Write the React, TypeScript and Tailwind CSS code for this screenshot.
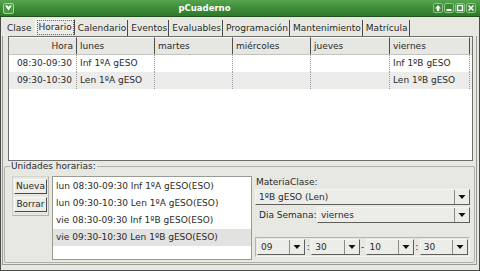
import React from 'react';

const tabs = ['Clase', 'Horario', 'Calendario', 'Eventos', 'Evaluables', 'Programación', 'Mantenimiento', 'Matrícula'];
const days = ['lunes', 'martes', 'miércoles', 'jueves', 'viernes'];
const rows = [
  { hora: '08:30-09:30', cells: ['Inf 1ºA gESO', '', '', '', 'Inf 1ºB gESO'], bg: 'bg-white' },
  { hora: '09:30-10:30', cells: ['Len 1ºA gESO', '', '', '', 'Len 1ºB gESO'], bg: 'bg-[#ececea]' },
];
const unidades = [
  'lun 08:30-09:30 Inf 1ºA gESO(ESO)',
  'lun 09:30-10:30 Len 1ºA gESO(ESO)',
  'vie 08:30-09:30 Inf 1ºB gESO(ESO)',
  'vie 09:30-10:30 Len 1ºB gESO(ESO)',
];

const Arrow = () => (
  <svg width="8" height="6" viewBox="0 0 8 6">
    <path d="M0.5 1h7L4 5z" fill="#111" />
  </svg>
);

const Combo = ({ text, className = '' }: { text: string; className?: string }) => (
  <div
    className={`flex h-[16px] bg-[#ecece8] border border-t-[#f4f4f2] border-l-[#f4f4f2] border-b-[#5e5e5a] border-r-[#5e5e5a] ${className}`}
  >
    <div className="flex-1 flex items-center pl-[3px] whitespace-nowrap overflow-hidden">{text}</div>
    <div className="w-[15px] flex items-center justify-center border-l border-[#8a8a86]">
      <Arrow />
    </div>
  </div>
);

const WinButton = ({ children }: { children: React.ReactNode }) => (
  <div className="w-[10px] h-[10px] rounded-[2px] bg-[#3a8a36] border border-[#8cc884] flex items-center justify-center">
    <svg width="8" height="8" viewBox="0 0 8 8">{children}</svg>
  </div>
);

const TitleBar = () => (
  <div className="h-[17px] flex items-center px-[3px] bg-linear-to-b from-[#56a44e] via-[#3d8d39] to-[#2c7a2a] border-b border-[#1f4f1d]">
    <div className="w-[11px] h-[11px] rounded-[2px] bg-[#4a9a44] border border-[#a4d89a] flex items-center justify-center">
      <svg width="7" height="6" viewBox="0 0 7 6">
        <path d="M0 0.5h2.5l1 1.5 1-1.5H7L3.5 5.5z" fill="#fff" />
      </svg>
    </div>
    <div className="flex-1 text-center text-white font-bold text-[8.5px] mr-[38px]">pCuaderno</div>
    <div className="flex gap-[1px] mr-[1px]">
      <WinButton>
        <path d="M4 1L7 4.5H5.2V7H2.8V4.5H1z" fill="#fff" />
      </WinButton>
      <WinButton>
        <rect x="1.5" y="5" width="5" height="2" fill="#fff" />
      </WinButton>
      <WinButton>
        <rect x="1.5" y="1.5" width="5" height="5" fill="none" stroke="#fff" strokeWidth="1.4" />
      </WinButton>
      <WinButton>
        <path d="M1.5 1.5l5 5M6.5 1.5l-5 5" stroke="#fff" strokeWidth="1.6" />
      </WinButton>
    </div>
  </div>
);

const Tabs = () => (
  <div className="h-[19px] flex items-start pt-[2px] pl-[3px]">
    {tabs.map((t, i) => {
      if (i === 1) {
        return (
          <div
            key={t}
            className="h-[16px] flex items-center pl-[2px] pr-[1px] border-t border-l border-[#fbfbfa] border-r border-r-[#4a4a48] bg-[#ecece8]"
          >
            <span className="outline-1 outline-dotted outline-[#666] px-[1px] py-[2px]">{t}</span>
          </div>
        );
      }
      return (
        <div
          key={t}
          className={`h-[16px] mt-[1px] flex items-center pl-[3px] ${i === 0 ? 'pr-[3px]' : 'pr-[1px] border-r border-[#4a4a48]'}`}
        >
          {t}
        </div>
      );
    })}
  </div>
);

const Table = () => (
  <div className="ml-[5px] mr-[3px] h-[125px] bg-white border border-[#6e6e6a] flex flex-col">
    <div className="grid grid-cols-[68px_78px_78px_78px_79px_80px_1fr] h-[18px] bg-[#e6e6e2] border-b border-[#c4c4be]">
      <div className="flex items-center justify-end pr-[3px] border-r border-[#4e4e4c] border-t border-t-[#fafafa]">Hora</div>
      {days.map((d) => (
        <div key={d} className="flex items-center pl-[3px] border-r border-[#4e4e4c] border-t border-t-[#fafafa]">
          {d}
        </div>
      ))}
      <div className="border-t border-[#fafafa]" />
    </div>
    {rows.map((r) => (
      <div key={r.hora} className={`grid grid-cols-[68px_78px_78px_78px_79px_80px_1fr] h-[17px] ${r.bg}`}>
        <div className="flex items-center justify-end pr-[4px] border-r border-dotted border-[#9a9a9a]">{r.hora}</div>
        {r.cells.map((c, j) => (
          <div key={j} className="flex items-center pl-[3px] border-r border-dotted border-[#9a9a9a]">
            {c}
          </div>
        ))}
        <div />
      </div>
    ))}
  </div>
);

const Unidades = () => (
  <fieldset className="mx-[1px] h-[102px] border border-[#b0b0aa] rounded-[2px] pl-[7px] pr-[4px] pt-[5px] pb-[1px] flex">
    <legend className="px-[1px] -ml-[2px] leading-[10px]">Unidades horarias:</legend>
    <div className="flex flex-1 h-[84px]">
      <div className="w-[37px] h-[40px] flex flex-col gap-[3px] pt-[2px] pl-[1px] border border-[#d4d4ce] border-b-[#b4b4ae] border-r-[#b4b4ae]">
        {['Nueva', 'Borrar'].map((b) => (
          <div
            key={b}
            className="w-[33px] h-[15px] flex items-center justify-center bg-[#ecece8] border border-t-[#fafafa] border-l-[#fafafa] border-b-[#4a4a48] border-r-[#4a4a48]"
          >
            {b}
          </div>
        ))}
      </div>
      <div className="w-[200px] ml-[3px] h-[84px] bg-white border border-[#9a9a94] pt-[1px]">
        {unidades.map((u, i) => (
          <div key={u} className={`h-[17px] flex items-center pl-[3px] ${i === 3 ? 'bg-[#e2e2e0]' : ''}`}>
            {u}
          </div>
        ))}
      </div>
      <div className="flex-1 ml-[3px] flex flex-col">
        <div className="h-[12px] flex items-center pl-[1px]">MateriaClase:</div>
        <Combo text="1ºB gESO (Len)" className="mt-[1px]" />
        <div className="flex items-center mt-[2px]">
          <div className="w-[62px] pl-[4px]">Dia Semana:</div>
          <Combo text="viernes" className="flex-1" />
        </div>
        <div className="mt-[14px] h-[20px] flex items-center px-[1px] border border-[#b4b4ae] border-b-[#f4f4f2] border-r-[#f4f4f2]">
          <Combo text="09" className="flex-1" />
          <div className="w-[6px] text-center">:</div>
          <Combo text="30" className="flex-1" />
          <div className="w-[6px] text-center">-</div>
          <Combo text="10" className="flex-1" />
          <div className="w-[6px] text-center">:</div>
          <Combo text="30" className="flex-1" />
        </div>
      </div>
    </div>
  </fieldset>
);

export default function App() {
  return (
    <div className="w-[480px] h-[271px] flex flex-col overflow-hidden bg-[#e8e8e3] font-['DejaVu_Sans',sans-serif] text-[9px] leading-none text-[#2a2a2a]">
      <TitleBar />
      <div className="flex-1 flex flex-col border-x border-b border-[#4a4a48]">
        <Tabs />
        <div className="ml-[1px] mr-[2px] h-[229px] border-x border-b border-[#9a9a94]">
          <Table />
          <Unidades />
        </div>
      </div>
    </div>
  );
}
